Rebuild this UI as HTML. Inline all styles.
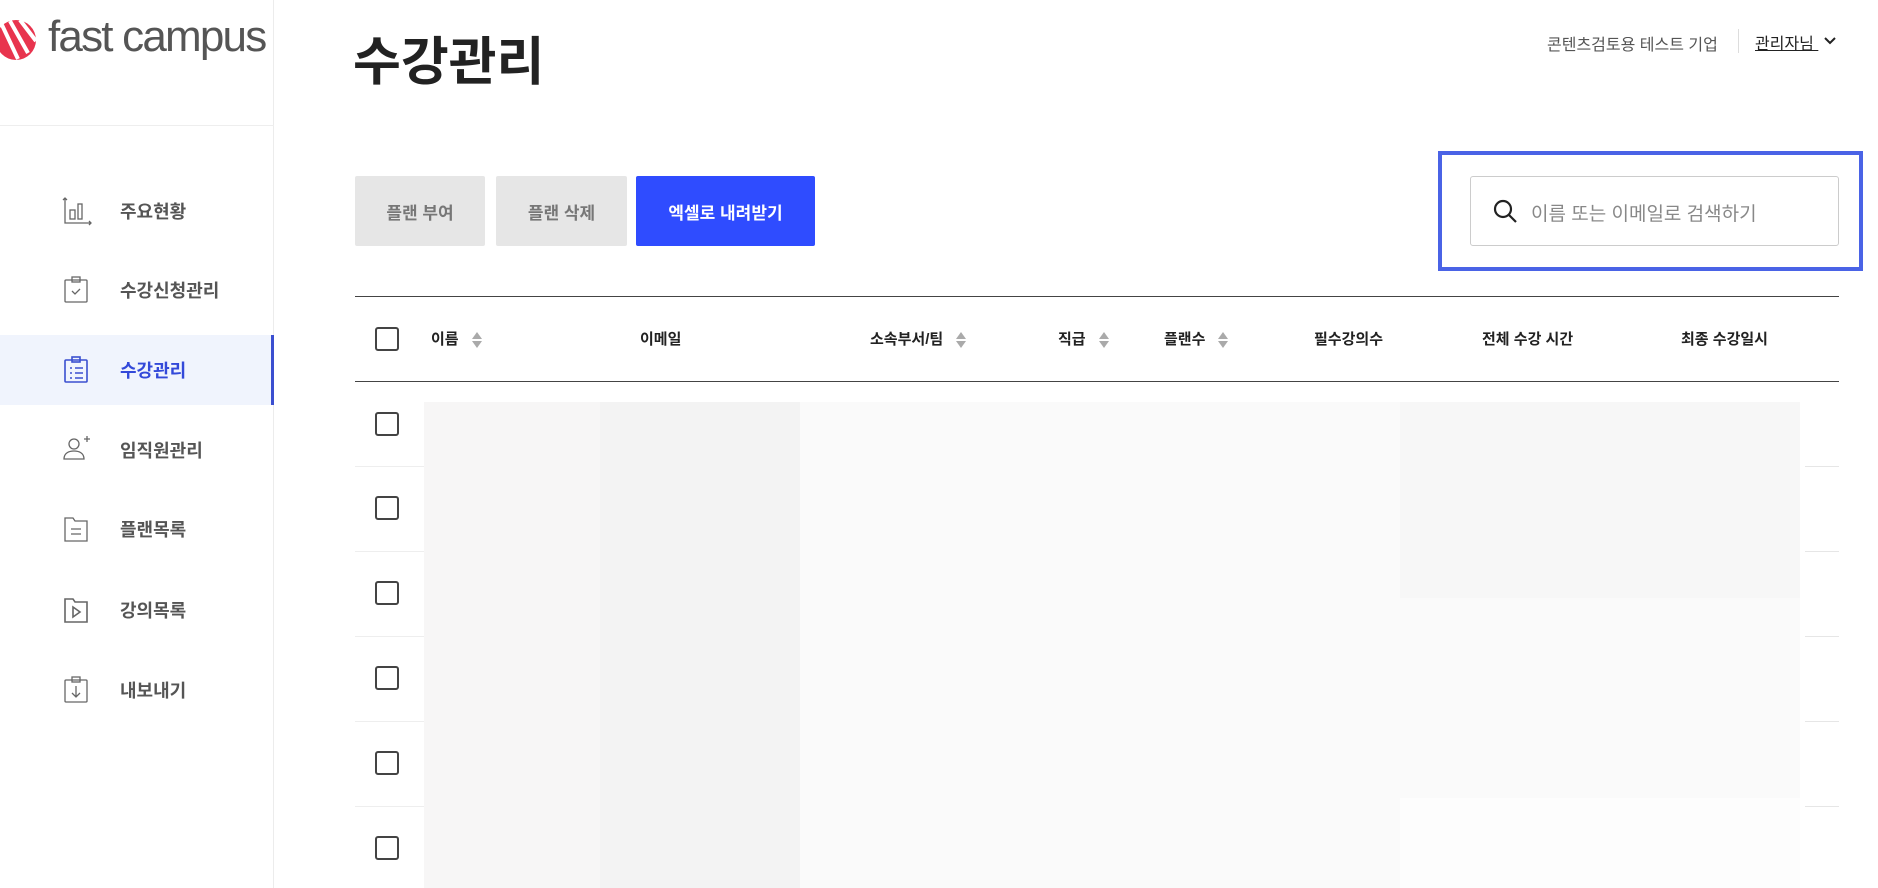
<!DOCTYPE html>
<html><head><meta charset="utf-8"><style>
*{margin:0;padding:0;box-sizing:border-box}
body{width:1878px;height:888px;overflow:hidden;background:#fff;font-family:"Liberation Sans","Noto Sans CJK KR",sans-serif;position:relative;color:#222}
.a{position:absolute}
.side{left:0;top:0;width:274px;height:888px;border-right:1px solid #ececec}
.menu{left:0;width:274px;height:70px;display:flex;align-items:center}
.menu svg{position:absolute;left:62px}
.menu span{position:absolute;left:120px;font-size:18px;font-weight:bold;color:#555}
.btn{top:176px;height:70px;display:flex;align-items:center;justify-content:center;font-size:17px;font-weight:bold;border-radius:2px}
.th{top:328px;font-size:15px;font-weight:bold;color:#222}
.sort{display:inline-block;width:12px;height:18px;vertical-align:middle;margin-left:12px}
.cb{width:24px;height:24px;border:2.5px solid #444;border-radius:3px;left:375px}
.line{left:1805px;width:34px;height:1px;background:#e6e6e6}
</style></head><body>
<div class="a side"></div>
<svg class="a" style="left:0;top:17px" width="40" height="46" viewBox="0 0 40 46"><circle cx="16" cy="23" r="20" fill="#e8344e"/><path d="M2 8 L18 42 M10 4 L28 36 M20 3 L36 24" stroke="#fff" stroke-width="4"/></svg>
<div class="a" style="left:48px;top:12px;font-size:44px;line-height:50px;color:#555;letter-spacing:-1.8px;font-family:'Liberation Sans',sans-serif">fast campus</div>
<div class="a" style="left:0;top:125px;width:274px;height:1px;background:#eee"></div>

<div class="a menu" style="top:176px"><svg width="30" height="30" viewBox="0 0 30 30" fill="none" stroke="#666" stroke-width="1.3"><path d="M3 2v25h26M1 4l2-2 2 2M27 25l2 2-2 2"/><rect x="8" y="14" width="5" height="9"/><rect x="16" y="8" width="4" height="15"/></svg><span>주요현황</span></div>
<div class="a menu" style="top:255px"><svg width="30" height="30" viewBox="0 0 30 30" fill="none" stroke="#666" stroke-width="1.3"><rect x="3" y="5" width="22" height="22" rx="1"/><rect x="10" y="2" width="8" height="5"/><path d="M10 16l3 3 5-5"/></svg><span>수강신청관리</span></div>
<div class="a" style="left:0;top:335px;width:274px;height:70px;background:#f0f4fd;border-right:3px solid #3a4fd0"></div>
<div class="a menu" style="top:335px"><svg width="30" height="30" viewBox="0 0 30 30" fill="none" stroke="#3a4fd0" stroke-width="1.6"><rect x="3" y="5" width="22" height="22" rx="1"/><rect x="10" y="2" width="8" height="5"/><path d="M8 13h2M13 13h8M8 18h2M13 18h8M8 23h2M13 23h8"/></svg><span style="color:#3349d9">수강관리</span></div>
<div class="a menu" style="top:415px"><svg width="30" height="30" viewBox="0 0 30 30" fill="none" stroke="#666" stroke-width="1.3"><circle cx="12" cy="9" r="5"/><path d="M2 24c0-6 5-8 10-8s10 2 10 8z"/><path d="M22 4h6M25 1v6"/></svg><span>임직원관리</span></div>
<div class="a menu" style="top:494px"><svg width="30" height="30" viewBox="0 0 30 30" fill="none" stroke="#666" stroke-width="1.3"><path d="M3 4h8l2 3h12v20H3z"/><path d="M9 15h10M9 20h10"/></svg><span>플랜목록</span></div>
<div class="a menu" style="top:575px"><svg width="30" height="30" viewBox="0 0 30 30" fill="none" stroke="#666" stroke-width="1.6"><path d="M3 4h8l2 3h12v20H3z"/><path d="M11 12l7 5-7 5z"/></svg><span>강의목록</span></div>
<div class="a menu" style="top:655px"><svg width="30" height="30" viewBox="0 0 30 30" fill="none" stroke="#666" stroke-width="1.3"><rect x="3" y="5" width="22" height="22" rx="1"/><rect x="10" y="2" width="8" height="5"/><path d="M14 11v11M10 18l4 4 4-4"/></svg><span>내보내기</span></div>

<div class="a" style="left:353px;top:20px;font-size:52px;font-weight:bold;color:#222">수강관리</div>
<div class="a" style="left:1547px;top:31px;font-size:16px;color:#555">콘텐츠검토용 테스트 기업</div>
<div class="a" style="left:1738px;top:29px;width:1px;height:24px;background:#ddd"></div>
<div class="a" style="left:1755px;top:30px;font-size:16px;color:#222;text-decoration:underline">관리자님&nbsp;</div>
<svg class="a" style="left:1823px;top:36px" width="14" height="10" viewBox="0 0 14 10"><path d="M2 2l5 5 5-5" fill="none" stroke="#222" stroke-width="2"/></svg>

<div class="a btn" style="left:355px;width:130px;background:#e6e6e6;color:#777">플랜 부여</div>
<div class="a btn" style="left:496px;width:131px;background:#e6e6e6;color:#777">플랜 삭제</div>
<div class="a btn" style="left:636px;width:179px;background:#2f4cff;color:#fff">엑셀로 내려받기</div>

<div class="a" style="left:1438px;top:151px;width:425px;height:120px;border:4px solid #4a63e6"></div>
<div class="a" style="left:1470px;top:176px;width:369px;height:70px;border:1px solid #ccc;border-radius:3px"></div>
<svg class="a" style="left:1493px;top:199px" width="26" height="26" viewBox="0 0 26 26" fill="none" stroke="#222" stroke-width="2.2"><circle cx="10" cy="10" r="8"/><path d="M16 16l7 7"/></svg>
<div class="a" style="left:1531px;top:199px;font-size:19px;color:#888">이름 또는 이메일로 검색하기</div>

<div class="a" style="left:355px;top:296px;width:1484px;height:1px;background:#444"></div>
<div class="a" style="left:355px;top:381px;width:1484px;height:1px;background:#444"></div>
<div class="a cb" style="top:327px"></div>
<svg width="0" height="0"><defs><g id="s"><path d="M6 1l5 7H1z" fill="#aaa"/><path d="M6 17l5-7H1z" fill="#aaa"/></g></defs></svg>
<div class="a th" style="left:431px">이름<svg class="sort" viewBox="0 0 12 18"><use href="#s"/></svg></div>
<div class="a th" style="left:640px">이메일</div>
<div class="a th" style="left:870px">소속부서/팀<svg class="sort" viewBox="0 0 12 18"><use href="#s"/></svg></div>
<div class="a th" style="left:1058px">직급<svg class="sort" viewBox="0 0 12 18"><use href="#s"/></svg></div>
<div class="a th" style="left:1164px">플랜수<svg class="sort" viewBox="0 0 12 18"><use href="#s"/></svg></div>
<div class="a th" style="left:1314px">필수강의수</div>
<div class="a th" style="left:1482px">전체 수강 시간</div>
<div class="a th" style="left:1681px">최종 수강일시</div>

<div class="a" style="left:424px;top:402px;width:176px;height:486px;background:#f7f6f6"></div>
<div class="a" style="left:600px;top:402px;width:200px;height:486px;background:#f3f3f3"></div>
<div class="a" style="left:800px;top:402px;width:600px;height:486px;background:#fafafa"></div>
<div class="a" style="left:1400px;top:402px;width:400px;height:196px;background:#f7f7f7"></div>
<div class="a" style="left:1400px;top:598px;width:400px;height:200px;background:#fafafa"></div>
<div class="a" style="left:1400px;top:798px;width:400px;height:90px;background:#fdfdfd"></div>
<div class="a" style="left:355px;top:466px;width:69px;height:1px;background:#eee"></div>
<div class="a" style="left:355px;top:551px;width:69px;height:1px;background:#eee"></div>
<div class="a" style="left:355px;top:636px;width:69px;height:1px;background:#eee"></div>
<div class="a" style="left:355px;top:721px;width:69px;height:1px;background:#eee"></div>
<div class="a" style="left:355px;top:806px;width:69px;height:1px;background:#eee"></div>
<div class="a line" style="top:466px"></div><div class="a line" style="top:551px"></div><div class="a line" style="top:636px"></div><div class="a line" style="top:721px"></div><div class="a line" style="top:806px"></div>
<div class="a cb" style="top:412px"></div>
<div class="a cb" style="top:496px"></div>
<div class="a cb" style="top:581px"></div>
<div class="a cb" style="top:666px"></div>
<div class="a cb" style="top:751px"></div>
<div class="a cb" style="top:836px"></div>
</body></html>
